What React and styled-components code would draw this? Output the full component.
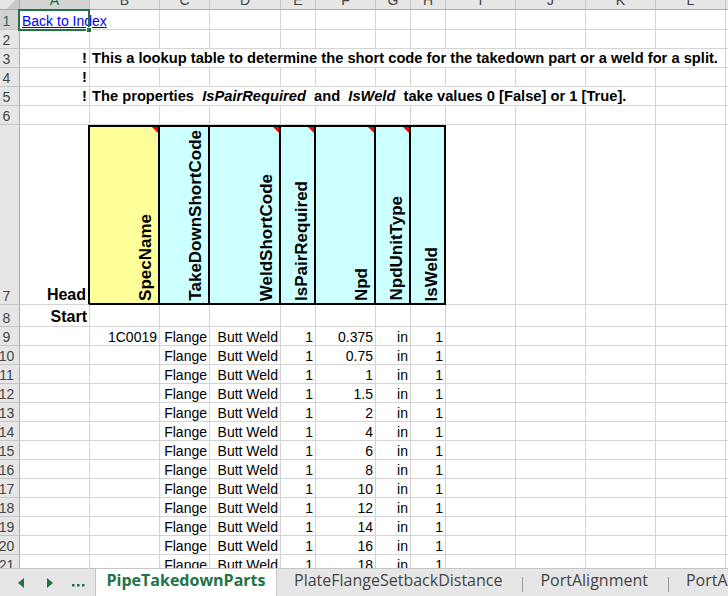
import React from 'react';
import styled, { createGlobalStyle, css } from 'styled-components';

const GlobalStyle = createGlobalStyle`
  html, body { margin: 0; padding: 0; background: #fff; overflow: hidden; }
  body { width: 728px; height: 596px; }
`;

const COL_WIDTHS = [20, 70, 70, 50, 71, 35, 60, 35, 35, 70, 70, 70, 70, 70];
const LETTERS = ['A', 'B', 'C', 'D', 'E', 'F', 'G', 'H', 'I', 'J', 'K', 'L', 'M'];
const ROW_HEIGHTS = [10, 20, 19, 19, 19, 19, 19, 180, 22, ...Array(14).fill(19)];
const GREEN = '#217346';
const GRID = '#d4d4d4';

const Window = styled.div`
  width: 728px;
  height: 596px;
  display: flex;
  flex-direction: column;
  overflow: hidden;
  font-family: "Liberation Sans", Arial, sans-serif;
`;

const SheetArea = styled.div`
  position: relative;
  flex: 1;
  min-height: 0;
  overflow: hidden;
`;

const Grid = styled.div`
  display: grid;
  grid-template-columns: ${COL_WIDTHS.map((w) => `${w}px`).join(' ')};
  grid-template-rows: ${ROW_HEIGHTS.map((h) => `${h}px`).join(' ')};
`;

const Corner = styled.div`
  box-sizing: border-box;
  border-right: 1px solid #ababab;
  border-bottom: 1px solid #ababab;
  background: linear-gradient(135deg, #e6e6e6 55%, #c9c9c9 55%);
`;

const ColHead = styled.div`
  box-sizing: border-box;
  background: ${(p) => (p.$active ? '#d2d2d2' : '#e6e6e6')};
  color: ${(p) => (p.$active ? GREEN : '#444')};
  border-right: 1px solid #c6c6c6;
  border-bottom: 1px solid #ababab;
  overflow: hidden;
  display: flex;
  justify-content: center;
  align-items: flex-end;
  font-size: 14px;
  line-height: 14px;
`;

const ColLetter = styled.span`
  transform: translateY(-2px);
`;

const RowHead = styled.div`
  box-sizing: border-box;
  background: ${(p) => (p.$active ? '#d2d2d2' : '#e6e6e6')};
  color: ${(p) => (p.$active ? GREEN : '#444')};
  border-right: 1px solid #ababab;
  border-bottom: 1px solid #c6c6c6;
  overflow: hidden;
  display: flex;
  align-items: flex-end;
  font-size: 14px;
  line-height: 16px;
`;

const RowLabel = styled.span`
  flex: 0 0 27px;
  margin-left: -7px;
  text-align: center;
`;

const Cell = styled.div`
  box-sizing: border-box;
  grid-column: span ${(p) => p.$span || 1};
  border-right: ${(p) => (p.$thickRight ? '2px solid #000' : `1px solid ${GRID}`)};
  border-bottom: 1px solid ${GRID};
  display: flex;
  align-items: flex-end;
  justify-content: ${(p) => (p.$align === 'right' ? 'flex-end' : 'flex-start')};
  padding: 0 2px;
  font-size: ${(p) => p.$size || 14}px;
  line-height: ${(p) => (p.$size ? p.$size + 2 : 16)}px;
  color: #000;
  white-space: pre;
  overflow: hidden;
  ${(p) => p.$bold && css`font-weight: 700;`}
`;

const Link = styled.span`
  color: #0000ff;
  text-decoration: underline;
`;

const Em = styled.span`
  font-style: italic;
`;

const HeaderCell = styled.div`
  position: relative;
  box-sizing: border-box;
  background: ${(p) => p.$bg};
  border-top: 2px solid #000;
  border-right: 2px solid #000;
  border-bottom: 2px solid #000;
  display: flex;
  justify-content: flex-end;
  align-items: flex-end;
  padding: 0 3px 2px 0;
`;

const VerticalLabel = styled.span`
  writing-mode: vertical-rl;
  transform: rotate(180deg);
  font-weight: 700;
  font-size: 17px;
  line-height: 19px;
  white-space: nowrap;
  color: #000;
`;

const CommentMark = styled.span`
  position: absolute;
  top: 0;
  right: 0;
  width: 0;
  height: 0;
  border-top: 6px solid #ff0000;
  border-left: 6px solid transparent;
`;

const Selection = styled.div`
  position: absolute;
  left: 18px;
  top: 9px;
  width: 72px;
  height: 22px;
  box-sizing: border-box;
  border: 2px solid ${GREEN};
  pointer-events: none;
`;

const FillHandle = styled.div`
  position: absolute;
  left: 86px;
  top: 27px;
  width: 6px;
  height: 6px;
  box-sizing: border-box;
  background: ${GREEN};
  border: 1px solid #fff;
`;

const TabBar = styled.div`
  flex: 0 0 28px;
  box-sizing: border-box;
  display: flex;
  background: #e6e6e6;
  border-top: 1px solid #c6c6c6;
  font-family: "Open Sans", "Noto Sans", sans-serif;
  white-space: nowrap;
  overflow: hidden;
`;

const Nav = styled.div`
  flex: 0 0 95px;
  box-sizing: border-box;
  display: flex;
  align-items: center;
  padding-left: 7px;
`;

const NavSlot = styled.div`
  flex: 0 0 28.5px;
  display: flex;
  justify-content: center;
  align-items: center;
`;

const ActiveTab = styled.div`
  flex: 0 0 182px;
  box-sizing: border-box;
  display: flex;
  flex-direction: column;
  background: #fff;
  border-left: 1px solid #c6c6c6;
  border-right: 1px solid #c6c6c6;
`;

const ActiveLabel = styled.div`
  flex: 1;
  display: flex;
  align-items: center;
  justify-content: center;
  padding-bottom: 3px;
  color: ${GREEN};
  font-weight: 700;
  font-size: 16px;
`;

const Underline = styled.div`
  height: 2px;
  margin: 0 1px 3px;
  background: ${GREEN};
`;

const Tab = styled.div`
  flex: 0 0 auto;
  display: flex;
  align-items: center;
  padding: 0 20px 5px 17px;
  color: #444;
  font-size: 16px;
`;

const Separator = styled.div`
  flex: 0 0 1px;
  align-self: flex-end;
  height: 15px;
  margin-bottom: 4px;
  background: #9a9a9a;
`;

const ArrowLeft = () => (
  <svg width="6" height="10" viewBox="0 0 6 10">
    <path d="M6 0 L0 5 L6 10 Z" fill={GREEN} />
  </svg>
);

const ArrowRight = () => (
  <svg width="6" height="10" viewBox="0 0 6 10">
    <path d="M0 0 L6 5 L0 10 Z" fill={GREEN} />
  </svg>
);

const Dots = () => (
  <svg width="13" height="10" viewBox="0 0 13 10">
    <rect x="0" y="6" width="2.5" height="2.5" fill={GREEN} />
    <rect x="5" y="6" width="2.5" height="2.5" fill={GREEN} />
    <rect x="10" y="6" width="2.5" height="2.5" fill={GREEN} />
  </svg>
);

const Empty = ({ count }) => (
  <>
    {Array.from({ length: count }, (_, i) => (
      <Cell key={i} />
    ))}
  </>
);

const HEADERS = [
  { label: 'SpecName', bg: '#ffff99', comment: true },
  { label: 'TakeDownShortCode', bg: '#ccffff', comment: false },
  { label: 'WeldShortCode', bg: '#ccffff', comment: true },
  { label: 'IsPairRequired', bg: '#ccffff', comment: true },
  { label: 'Npd', bg: '#ccffff', comment: true },
  { label: 'NpdUnitType', bg: '#ccffff', comment: true },
  { label: 'IsWeld', bg: '#ccffff', comment: false },
];

const NPD = ['0.375', '0.75', '1', '1.5', '2', '4', '6', '8', '10', '12', '14', '16', '18'];

const DataRow = ({ n, spec, npd }) => (
  <>
    <RowHead>
      <RowLabel>{n}</RowLabel>
    </RowHead>
    <Cell />
    <Cell $align="right">{spec}</Cell>
    <Cell $align="right">Flange</Cell>
    <Cell $align="right">Butt Weld</Cell>
    <Cell $align="right">1</Cell>
    <Cell $align="right">{npd}</Cell>
    <Cell $align="right">in</Cell>
    <Cell $align="right">1</Cell>
    <Empty count={5} />
  </>
);

const RowNum = ({ n, active }) => (
  <RowHead $active={active}>
    <RowLabel>{n}</RowLabel>
  </RowHead>
);

export default function App() {
  return (
    <>
      <GlobalStyle />
      <Window>
        <SheetArea>
          <Grid>
            <Corner />
            {LETTERS.map((l) => (
              <ColHead key={l} $active={l === 'A'}>
                <ColLetter>{l}</ColLetter>
              </ColHead>
            ))}

            <RowNum n={1} active />
            <Cell $span={2}>
              <Link>Back to Index</Link>
            </Cell>
            <Empty count={11} />

            <RowNum n={2} />
            <Empty count={13} />

            <RowNum n={3} />
            <Cell $align="right" $bold $size={14.7}>!</Cell>
            <Cell $span={11} $bold $size={14.7}>
              This a lookup table to determine the short code for the takedown part or a weld for a split.
            </Cell>
            <Cell />

            <RowNum n={4} />
            <Cell $align="right" $bold $size={14.7}>!</Cell>
            <Empty count={12} />

            <RowNum n={5} />
            <Cell $align="right" $bold $size={14.7}>!</Cell>
            <Cell $span={10} $bold $size={14.7}>
              {'The properties  '}
              <Em>IsPairRequired</Em>
              {'  and  '}
              <Em>IsWeld</Em>
              {'  take values 0 [False] or 1 [True].'}
            </Cell>
            <Empty count={2} />

            <RowNum n={6} />
            <Empty count={13} />

            <RowNum n={7} />
            <Cell $align="right" $bold $size={16} $thickRight>
              Head
            </Cell>
            {HEADERS.map((h) => (
              <HeaderCell key={h.label} $bg={h.bg}>
                <VerticalLabel>{h.label}</VerticalLabel>
                {h.comment && <CommentMark />}
              </HeaderCell>
            ))}
            <Empty count={5} />

            <RowNum n={8} />
            <Cell $align="right" $bold $size={16}>
              Start
            </Cell>
            <Empty count={12} />

            {NPD.map((v, i) => (
              <DataRow key={v} n={9 + i} spec={i === 0 ? '1C0019' : ''} npd={v} />
            ))}
          </Grid>
          <Selection />
          <FillHandle />
        </SheetArea>
        <TabBar>
          <Nav>
            <NavSlot>
              <ArrowLeft />
            </NavSlot>
            <NavSlot>
              <ArrowRight />
            </NavSlot>
            <NavSlot>
              <Dots />
            </NavSlot>
          </Nav>
          <ActiveTab>
            <ActiveLabel>PipeTakedownParts</ActiveLabel>
            <Underline />
          </ActiveTab>
          <Tab>PlateFlangeSetbackDistance</Tab>
          <Separator />
          <Tab>PortAlignment</Tab>
          <Separator />
          <Tab>PortAlignmentRule</Tab>
        </TabBar>
      </Window>
    </>
  );
}
